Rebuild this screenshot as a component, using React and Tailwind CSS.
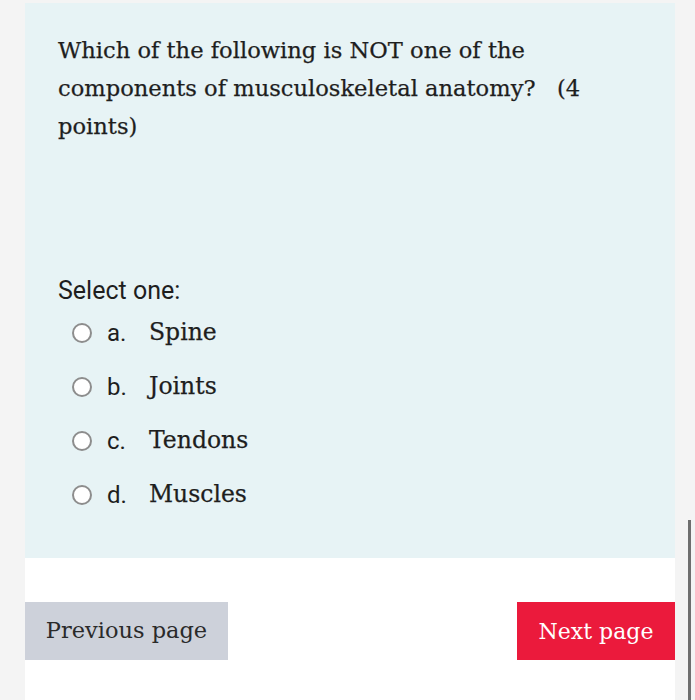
import React from "react";

const slab = { fontFamily: '"DejaVu Serif", "Liberation Serif", serif' };
const sans = { fontFamily: 'Roboto, "Liberation Sans", sans-serif' };

function Option({ letter, label }) {
  return (
    <div className="flex items-center h-[54px]">
      <span className="ml-[14px] w-[20px] h-[20px] rounded-full border-2 border-[#8d8d8d] bg-white" />
      <span className="ml-[15px] w-[42px] text-[24px] text-[#1e1e1e]" style={sans}>{letter}</span>
      <span className="text-[23.5px] text-[#1e1e1e] [-webkit-text-stroke:0.25px_#1e1e1e]" style={slab}>{label}</span>
    </div>
  );
}

export default function App() {
  return (
    <div className="relative w-[695px] h-[700px] bg-[#f4f4f4] overflow-hidden">
      <div className="ml-[25px] w-[650px] h-full flex flex-col">
        <div className="mt-[3px] h-[555px] bg-[#e7f3f5] pl-[33px] pr-[20px] pt-[28px]">
          <p className="text-[22.6px] leading-[38px] text-[#1e1e1e] w-[560px] [-webkit-text-stroke:0.25px_#1e1e1e]" style={slab}>
            Which of the following is NOT one of the components of musculoskeletal anatomy?&nbsp;&nbsp; (4 points)
          </p>
          <p className="mt-[131px] text-[25px] leading-[30px] text-[#1e1e1e]" style={sans}>
            Select one:
          </p>
          <div className="flex flex-col">
            <Option letter="a." label="Spine" />
            <Option letter="b." label="Joints" />
            <Option letter="c." label="Tendons" />
            <Option letter="d." label="Muscles" />
          </div>
        </div>
        <div className="flex-1 bg-white flex justify-between items-start pt-[44px]">
          <button className="h-[58px] w-[203px] bg-[#cdd1da] text-[22.5px] text-[#2a2a2a]" style={slab}>
            Previous page
          </button>
          <button className="h-[58px] w-[158px] bg-[#eb1a3c] text-[22px] text-white" style={slab}>
            Next page
          </button>
        </div>
      </div>
      <div className="absolute left-[688px] top-[520px] w-[3px] h-[180px] bg-[#6e6e6e]" />
    </div>
  );
}
